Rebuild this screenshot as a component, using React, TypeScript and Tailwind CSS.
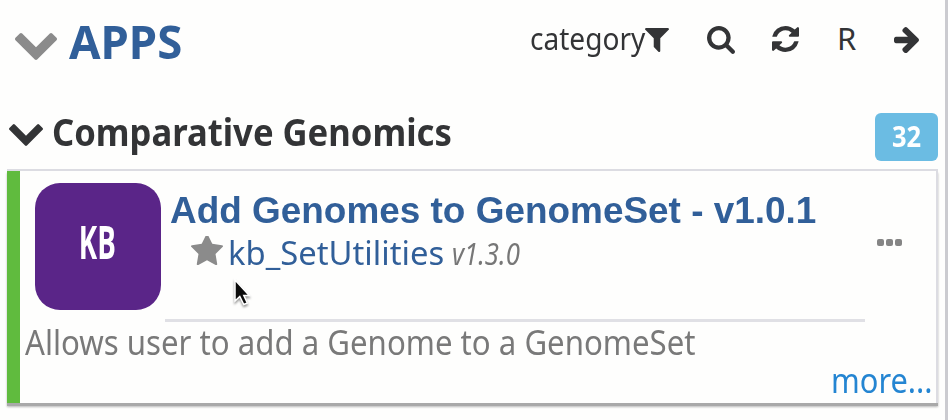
import type { ReactNode } from 'react';

type GlyphProps = { box: string; d: string; className: string };

function Glyph({ box, d, className }: GlyphProps) {
  return (
    <svg viewBox={box} preserveAspectRatio="none" fill="currentColor" className={`block shrink-0 ${className}`}>
      <path d={d} />
    </svg>
  );
}

const chevron =
  'M1683 808l-742 741q-19 19-45 19t-45-19l-742-741q-19-19-19-45.5t19-45.5l166-165q19-19 45-19t45 19l531 531 531-531q19-19 45-19t45 19l166 165q19 19 19 45.5t-19 45.5z';
const filter =
  'M1595 295q17 41-14 70l-493 493v742q0 42-39 59-13 5-25 5-27 0-45-19l-256-256q-19-19-19-45v-486l-493-493q-31-29-14-70 17-39 59-39h1280q42 0 59 39z';
const search =
  'M1216 832q0-185-131.5-316.5t-316.5-131.5-316.5 131.5-131.5 316.5 131.5 316.5 316.5 131.5 316.5-131.5 131.5-316.5zm512 832q0 52-38 90t-90 38q-54 0-90-38l-343-342q-179 124-399 124-143 0-273.5-55.5t-225-150-150-225-55.5-273.5 55.5-273.5 150-225 225-150 273.5-55.5 273.5 55.5 225 150 150 225 55.5 273.5q0 220-124 399l343 343q37 37 37 90z';
const refresh =
  'M1639 1056q0 5-1 7-64 268-268 434.5t-478 166.5q-146 0-282.5-55t-243.5-157l-129 129q-19 19-45 19t-45-19-19-45v-448q0-26 19-45t45-19h448q26 0 45 19t19 45-19 45l-137 137q71 66 161 102t187 36q134 0 250-65t186-179q11-17 53-117 8-23 30-23h192q13 0 22.5 9.5t9.5 22.5zm25-800v448q0 26-19 45t-45 19h-448q-26 0-45-19t-19-45 19-45l138-138q-148-137-349-137-134 0-250 65t-186 179q-11 17-53 117-8 23-30 23h-199q-13 0-22.5-9.5t-9.5-22.5v-7q65-268 270-434.5t480-166.5q146 0 284 55.5t245 156.5l130-129q19-19 45-19t45 19 19 45z';
const arrow =
  'M1664 960q0 54-37 91l-651 651q-39 37-91 37-51 0-90-37l-75-75q-38-38-38-91t38-91l293-293h-704q-52 0-84.5-37.5t-32.5-90.5v-128q0-53 32.5-90.5t84.5-37.5h704l-293-294q-38-36-38-90t38-90l75-75q38-38 90-38 53 0 91 38l651 651q37 35 37 90z';
const star =
  'M1728 647q0 22-26 48l-363 354 86 500q1 7 1 20 0 21-10.5 35.5t-30.5 14.5q-19 0-40-12l-449-236-449 236q-22 12-40 12-21 0-31.5-14.5t-10.5-35.5q0-6 2-20l86-500-364-354q-25-27-25-48 0-37 56-46l502-73 225-455q19-41 49-41t49 41l225 455 502 73q56 9 56 46z';

// Horizontally scaled text inside a box of fixed width.
function Label({ box, text, children }: { box: string; text: string; children: ReactNode }) {
  return (
    <span className={`block shrink-0 whitespace-nowrap ${box}`}>
      <span className={`inline-block origin-left ${text}`}>{children}</span>
    </span>
  );
}

export default function App() {
  return (
    <div className="relative flex h-[420px] w-[948px] overflow-hidden bg-[#fefefd] font-['Noto_Sans',sans-serif] text-[#333436]">
      <div className="flex w-[938px] shrink-0 flex-col pl-[7px]">
        <header className="flex h-[83px] shrink-0 items-start">
          <Glyph box="90 533 1612 1035" d={chevron} className="mt-[33px] ml-[8px] h-[27px] w-[42px] text-[#8b8b8b]" />
          <Label box="ml-[12px] h-[83px] w-[114px] text-[47px] leading-[82px] font-bold text-[#315f99]" text="scale-x-[0.97]">APPS</Label>
          <div className="ml-[347px] flex items-start">
            <Label box="w-[115px] text-[31px] leading-[77px]" text="scale-x-[0.905]">category</Label>
            <Glyph box="191 256 1410 1408" d={filter} className="mt-[28px] h-[24px] w-[24px]" />
            <Glyph box="64 128 1664 1664" d={search} className="mt-[26px] ml-[38px] h-[28px] w-[28px]" />
            <Glyph box="128 128 1536 1536" d={refresh} className="mt-[26px] ml-[37px] h-[26px] w-[27px]" />
            <Label box="ml-[38px] w-[21px] text-[31px] leading-[77px]" text="">R</Label>
            <Glyph box="192 181 1472 1558" d={arrow} className="mt-[27px] ml-[36px] h-[26px] w-[25px]" />
          </div>
        </header>
        <div className="flex h-[86px] shrink-0 items-start">
          <Glyph box="90 533 1612 1035" d={chevron} className="mt-[41px] ml-[2px] h-[22px] w-[34px]" />
          <Label box="ml-[9px] w-[400px] text-[38px] leading-[96px] font-bold" text="scale-x-[0.911]">Comparative Genomics</Label>
          <span className="mt-[30px] ml-auto flex h-[48px] w-[63px] items-center justify-center rounded-[6px] bg-[#6bbce3] pb-[4px] text-[29px] leading-none font-bold text-white">
            <span className="scale-x-[0.88]">32</span>
          </span>
        </div>
        <article className="flex h-[234px] shrink-0 border-t-2 border-r-2 border-[#dcdce2] shadow-[0_3px_0_#a9a9a9,0_4px_2px_#b8b8b8]">
          <div className="w-[13px] shrink-0 bg-[#60bb3e]" />
          <div className="flex grow flex-col">
            <div className="flex h-[151px] shrink-0">
              <div className="mt-[12px] ml-[14.500px] flex h-[126.500px] w-[126.500px] shrink-0 items-center justify-center rounded-[25px] bg-[#5a2588] pb-[9px]">
                <span className="scale-x-[0.59] font-['Open_Sans',sans-serif] text-[47px] leading-none font-bold text-white">KB</span>
              </div>
              <div className="ml-[4px] flex h-[151px] w-[700px] shrink-0 flex-col border-b-[3px] border-[#e0e0e5]">
                <Label box="mt-[18px] h-[44px] pl-[5px] font-['Liberation_Sans',sans-serif] text-[37px] leading-[44px] font-bold text-[#315f99]" text="scale-x-[0.998]">
                  Add Genomes to GenomeSet - v1.0.1
                </Label>
                <div className="flex h-[44px] items-start pl-[26px]">
                  <Glyph box="64 128 1664 1587" d={star} className="mt-[3px] h-[31px] w-[32px] text-[#8b8b8b]" />
                  <Label box="ml-[5px] w-[218px] text-[33px] leading-[40px] text-[#315f99]" text="scale-x-[0.993]">kb_SetUtilities</Label>
                  <Label box="ml-[6px] w-[75px] text-[30px] leading-[41px] text-[#777] italic" text="scale-x-[0.86]">v1.3.0</Label>
                </div>
              </div>
              <div className="mt-[68px] ml-[12px] flex h-[7px] gap-[2px]">
                <span className="size-[7px] rounded-[2px] bg-[#858585]" />
                <span className="size-[7px] rounded-[2px] bg-[#858585]" />
                <span className="size-[7px] rounded-[2px] bg-[#858585]" />
              </div>
            </div>
            <Label box="h-[42px] w-[680px] pl-[5px] text-[34px] leading-[40px] text-[#797979]" text="scale-x-[0.917]">Allows user to add a Genome to a GenomeSet</Label>
            <div className="flex h-[36px] justify-end pr-[3px]">
              <Label box="w-[102px] text-[34px] leading-[32px] text-[#2485d2]" text="scale-x-[0.905]">more...</Label>
            </div>
          </div>
        </article>
      </div>
      <div className="ml-auto w-[3px] bg-[#cbcbd0]" />
      <svg viewBox="0 0 20 32" className="absolute top-[278px] left-[232px] h-[32px] w-[20px] drop-shadow-[0_2px_1px_rgba(0,0,0,0.4)]">
        <path d="M3 2v21l4.8-4.5 4 8 3.5-1.5-3.5-7.600h5.500z" fill="#0b0b0b" stroke="#fff" strokeWidth="1.500" />
      </svg>
    </div>
  );
}
